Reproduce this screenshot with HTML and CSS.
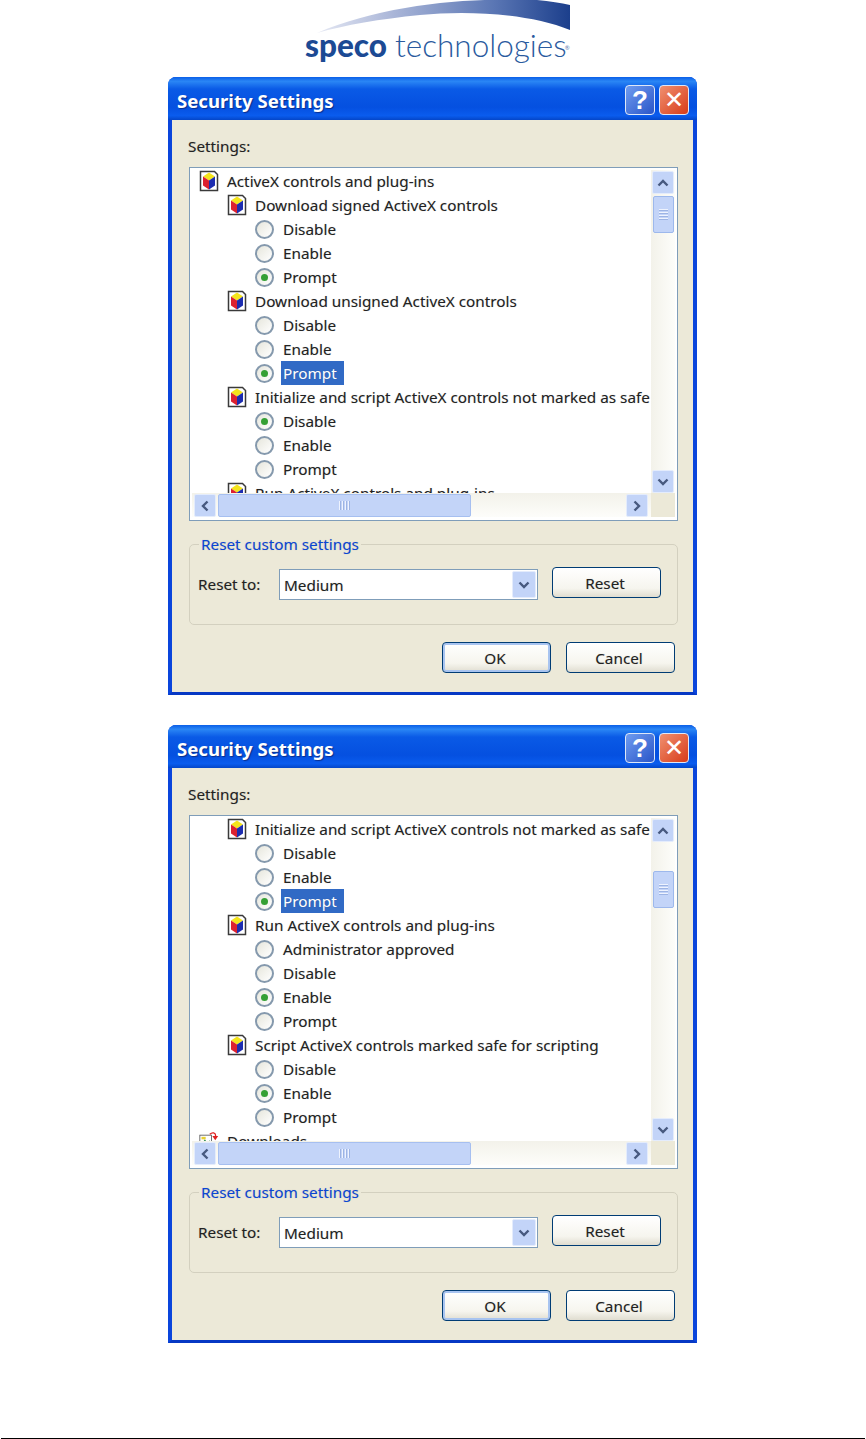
FILE: index.html
```html
<!DOCTYPE html>
<html lang="en">
<head>
<meta charset="utf-8">
<title>Security Settings</title>
<link rel="stylesheet" href="styles.css">
</head>
<body>
<svg class="defs" width="0" height="0" aria-hidden="true">
  <defs>
    <linearGradient id="sw" x1="0" x2="1" y1="0" y2="0">
      <stop offset="0" stop-color="#e6e9f4"/>
      <stop offset=".3" stop-color="#aab6d8"/>
      <stop offset=".7" stop-color="#5a76b4"/>
      <stop offset="1" stop-color="#1c3f8c"/>
    </linearGradient>
    <symbol id="shield" viewBox="0 0 20 22">
      <path d="M1.500 1.500H15.500L18.500 4.500V20.500H1.500Z" fill="#fff" stroke="#3a3a3a" stroke-width="1.500"/>
      <path d="M10 2.500L16 6.500L10 10.500L4 6.500Z" fill="#f4e41c"/>
      <path d="M4 6.500L10 10.500V19.500L4 15.500Z" fill="#dc2030"/>
      <path d="M16 6.500L10 10.500V19.500L16 15.500Z" fill="#1c2cb0"/>
    </symbol>
    <symbol id="dl" viewBox="0 0 24 22">
      <rect x="1" y="4" width="14" height="14" fill="#fff" stroke="#555"/>
      <path d="M3 15L7 9L10 13L13 10V16H3Z" fill="#2a8a4a"/>
      <rect x="3" y="6" width="5" height="3" fill="#e8d030"/>
      <path d="M13 3C16 0 20 1 20 5" fill="none" stroke="#e02020" stroke-width="1.600"/>
      <path d="M16 5H23L19.500 10Z" fill="#e02020"/>
    </symbol>
    <symbol id="up" viewBox="0 0 12 8"><path d="M1.500 6.500L6 2L10.500 6.500" fill="none" stroke="#47597f" stroke-width="2.400"/></symbol>
    <symbol id="down" viewBox="0 0 12 8"><path d="M1.500 1.500L6 6L10.500 1.500" fill="none" stroke="#47597f" stroke-width="2.400"/></symbol>
    <symbol id="left" viewBox="0 0 8 12"><path d="M6.500 1.500L2 6L6.500 10.500" fill="none" stroke="#47597f" stroke-width="2.400"/></symbol>
    <symbol id="right" viewBox="0 0 8 12"><path d="M1.500 1.500L6 6L1.500 10.500" fill="none" stroke="#47597f" stroke-width="2.400"/></symbol>
  </defs>
</svg>

<div class="page">
  <header class="logo">
    <svg class="swoosh" width="266" height="33" viewBox="0 0 266 33"><path d="M12 33C65 10 135 0 190 0H232C245 1 256 3 265 5V30C225 14 165 10 115 15C75 19 40 25 12 33Z" fill="url(#sw)"/></svg>
    <div class="wordmark"><span class="speco">speco</span><span class="tech">technologies</span><span class="reg">®</span></div>
  </header>

  <main class="dialogs">
    <section class="dialog">
      <div class="titlebar">
        <h1 class="title">Security Settings</h1>
        <div class="winbtns">
          <span class="winbtn help">?</span>
          <span class="winbtn close">✕</span>
        </div>
      </div>
      <div class="body">
        <div class="label">Settings:</div>
        <div class="listbox">
          <div class="viewport">
            <div class="row l0"><svg class="ico"><use href="#shield"/></svg><span>ActiveX controls and plug-ins</span></div>
            <div class="row l1"><svg class="ico"><use href="#shield"/></svg><span>Download signed ActiveX controls</span></div>
            <div class="row l2"><i class="radio"></i><span>Disable</span></div>
            <div class="row l2"><i class="radio"></i><span>Enable</span></div>
            <div class="row l2"><i class="radio on"><b></b></i><span>Prompt</span></div>
            <div class="row l1"><svg class="ico"><use href="#shield"/></svg><span>Download unsigned ActiveX controls</span></div>
            <div class="row l2"><i class="radio"></i><span>Disable</span></div>
            <div class="row l2"><i class="radio"></i><span>Enable</span></div>
            <div class="row l2"><i class="radio on"><b></b></i><span class="sel">Prompt</span></div>
            <div class="row l1"><svg class="ico"><use href="#shield"/></svg><span>Initialize and script ActiveX controls not marked as safe</span></div>
            <div class="row l2"><i class="radio on"><b></b></i><span>Disable</span></div>
            <div class="row l2"><i class="radio"></i><span>Enable</span></div>
            <div class="row l2"><i class="radio"></i><span>Prompt</span></div>
            <div class="row l1"><svg class="ico"><use href="#shield"/></svg><span>Run ActiveX controls and plug-ins</span></div>
          </div>
          <div class="vbar">
            <span class="sbtn"><svg class="arrow-v"><use href="#up"/></svg></span>
            <div class="vtrack"><div class="vthumb"><i></i><i></i><i></i><i></i></div></div>
            <span class="sbtn"><svg class="arrow-v"><use href="#down"/></svg></span>
          </div>
          <div class="hbar">
            <span class="sbtn"><svg class="arrow-h"><use href="#left"/></svg></span>
            <div class="htrack"><div class="hthumb"><i></i><i></i><i></i><i></i></div></div>
            <span class="sbtn"><svg class="arrow-h"><use href="#right"/></svg></span>
          </div>
          <div class="corner"></div>
        </div>
        <fieldset class="group">
          <legend class="legend">Reset custom settings</legend>
          <div class="reset-row">
            <span class="reset-label">Reset to:</span>
            <div class="combo"><span class="combo-val">Medium</span><span class="sbtn combo-btn"><svg class="arrow-v"><use href="#down"/></svg></span></div>
            <button class="btn btn-reset" type="button">Reset</button>
          </div>
        </fieldset>
        <div class="actions">
          <button class="btn default" type="button">OK</button>
          <button class="btn" type="button">Cancel</button>
        </div>
      </div>
    </section>

    <section class="dialog">
      <div class="titlebar">
        <h1 class="title">Security Settings</h1>
        <div class="winbtns">
          <span class="winbtn help">?</span>
          <span class="winbtn close">✕</span>
        </div>
      </div>
      <div class="body">
        <div class="label">Settings:</div>
        <div class="listbox">
          <div class="viewport">
            <div class="row l1"><svg class="ico"><use href="#shield"/></svg><span>Initialize and script ActiveX controls not marked as safe</span></div>
            <div class="row l2"><i class="radio"></i><span>Disable</span></div>
            <div class="row l2"><i class="radio"></i><span>Enable</span></div>
            <div class="row l2"><i class="radio on"><b></b></i><span class="sel">Prompt</span></div>
            <div class="row l1"><svg class="ico"><use href="#shield"/></svg><span>Run ActiveX controls and plug-ins</span></div>
            <div class="row l2"><i class="radio"></i><span>Administrator approved</span></div>
            <div class="row l2"><i class="radio"></i><span>Disable</span></div>
            <div class="row l2"><i class="radio on"><b></b></i><span>Enable</span></div>
            <div class="row l2"><i class="radio"></i><span>Prompt</span></div>
            <div class="row l1"><svg class="ico"><use href="#shield"/></svg><span>Script ActiveX controls marked safe for scripting</span></div>
            <div class="row l2"><i class="radio"></i><span>Disable</span></div>
            <div class="row l2"><i class="radio on"><b></b></i><span>Enable</span></div>
            <div class="row l2"><i class="radio"></i><span>Prompt</span></div>
            <div class="row l0"><svg class="ico"><use href="#dl"/></svg><span>Downloads</span></div>
          </div>
          <div class="vbar">
            <span class="sbtn"><svg class="arrow-v"><use href="#up"/></svg></span>
            <div class="vtrack lower"><div class="vthumb"><i></i><i></i><i></i><i></i></div></div>
            <span class="sbtn"><svg class="arrow-v"><use href="#down"/></svg></span>
          </div>
          <div class="hbar">
            <span class="sbtn"><svg class="arrow-h"><use href="#left"/></svg></span>
            <div class="htrack"><div class="hthumb"><i></i><i></i><i></i><i></i></div></div>
            <span class="sbtn"><svg class="arrow-h"><use href="#right"/></svg></span>
          </div>
          <div class="corner"></div>
        </div>
        <fieldset class="group">
          <legend class="legend">Reset custom settings</legend>
          <div class="reset-row">
            <span class="reset-label">Reset to:</span>
            <div class="combo"><span class="combo-val">Medium</span><span class="sbtn combo-btn"><svg class="arrow-v"><use href="#down"/></svg></span></div>
            <button class="btn btn-reset" type="button">Reset</button>
          </div>
        </fieldset>
        <div class="actions">
          <button class="btn default" type="button">OK</button>
          <button class="btn" type="button">Cancel</button>
        </div>
      </div>
    </section>
  </main>

  <footer class="rule"></footer>
</div>
</body>
</html>
```
FILE: styles.css
```css
* { box-sizing: border-box; }
html, body { margin: 0; padding: 0; background: #fff; }
body { font-family: "Noto Sans", "Open Sans", sans-serif; color: #222; overflow: hidden; }
.defs { display: block; height: 0; }

.page { height: 1439px; display: flex; flex-direction: column; }

/* logo */
.logo { flex: none; height: 77px; margin-left: 305px; width: 270px; display: flex; flex-direction: column; }
.swoosh { display: block; flex: none; }
.wordmark { display: flex; align-items: baseline; height: 30px; margin-top: -3px; font-family: Lato, "Open Sans", sans-serif; line-height: 30px; }
.speco { font-size: 31.500px; font-weight: 900; color: #1c4a94; }
.tech { font-size: 31.500px; font-weight: 300; margin-left: 8px; color: #2a5a9e; }
.reg { font-size: 6px; align-self: flex-start; margin: 3px 0 0 -2px; color: #5a7ab0; }

/* dialogs */
.dialogs { display: flex; flex-direction: column; gap: 30px; padding-left: 168px; }
.dialog { width: 529px; height: 618px; display: flex; flex-direction: column; background: #0a3fd8; border-radius: 8px 8px 0 0; border: 4px solid #0a45dc; border-top: 0; border-bottom: 3px solid #0638c4; }

.titlebar { flex: none; height: 43px; margin: 0 -4px; padding: 0 8px 0 9px; display: flex; align-items: center; justify-content: space-between; border-radius: 8px 8px 0 0; background: linear-gradient(180deg, #0a5fe8 0%, #2a86f5 10%, #0a5ae6 28%, #0550e0 70%, #0a5cee 90%, #0446c8 100%); }
.title { margin: 4px 0 0; font-size: 18.600px; font-weight: 700; color: #fff; text-shadow: 1px 1px 1px #0a2f8c; }
.winbtns { display: flex; gap: 4px; margin-top: 3px; }
.winbtn { width: 30px; height: 30px; border: 1px solid #dfe8f8; border-radius: 4px; display: flex; align-items: center; justify-content: center; color: #fff; font-weight: 700; font-size: 26px; line-height: 1; }
.help { background: linear-gradient(135deg, #6f9cf0, #2a55c8); font-family: "Liberation Sans", sans-serif; }
.close { background: linear-gradient(135deg, #f09070, #d83c18); font-size: 24px; font-family: "DejaVu Sans", sans-serif; }

.body { flex: 1; min-height: 0; background: #ece9d8; padding: 17px 16px 0 17px; display: flex; flex-direction: column; text-shadow: 0 0 1px rgba(70, 70, 70, .3); }
.label { font-size: 15.300px; height: 20px; line-height: 19px; margin: 0 0 10px -1px; }

/* list */
.listbox { flex: none; height: 354px; width: 489px; background: #fff; border: 1px solid #7f9db9; padding: 2px 2px 3px; display: grid; grid-template-columns: 1fr 24px; grid-template-rows: 1fr 24px; }
.viewport { overflow: hidden; min-width: 0; min-height: 0; }
.row { height: 24px; display: flex; align-items: center; font-size: 15.300px; white-space: nowrap; }
.row:first-child { margin-top: -1px; }
.l0 { padding-left: 7px; }
.l1 { padding-left: 35px; }
.l2 { padding-left: 63px; }
.ico { width: 20px; height: 22px; flex: none; margin-right: 8px; }
.radio { width: 19px; height: 19px; flex: none; margin-right: 9px; border-radius: 50%; border: 2px solid #8599ad; background: linear-gradient(135deg, #e6e6dc, #fff); display: flex; align-items: center; justify-content: center; }
.radio b { width: 7px; height: 7px; border-radius: 50%; background: #35a035; display: block; }
.sel { background: #316ac5; color: #fff; height: 24px; line-height: 24px; padding: 0 7px 0 2px; margin-left: -2px; }

/* scrollbars */
.vbar { display: flex; flex-direction: column; background: linear-gradient(90deg, #f3f2ea, #fdfdfa); padding: 1px 0 0 1px; }
.hbar { display: flex; background: linear-gradient(180deg, #f3f2ea, #fdfdfa); padding: 1px 3px 0 2px; }
.corner { background: #ece9d8; }
.sbtn { flex: none; width: 22px; height: 23px; display: flex; align-items: center; justify-content: center; background: #c3d4f8; border: 1px solid #e4ecfc; border-radius: 2px; }
.arrow-v { width: 12px; height: 8px; }
.arrow-h { width: 8px; height: 12px; }
.vtrack { flex: 1; padding-top: 2px; }
.vtrack.lower { padding-top: 29px; }
.vthumb { width: 21px; height: 37px; margin-left: 1px; background: #c3d4f8; border: 1px solid #9db8ec; border-radius: 2px; display: flex; flex-direction: column; align-items: center; justify-content: center; gap: 1px; }
.vthumb i { display: block; width: 9px; height: 1px; background: #eef3fe; box-shadow: 0 1px 0 #9db4e4; margin-bottom: 1px; }
.htrack { flex: 1; padding-left: 2px; }
.hthumb { width: 253px; height: 23px; background: #c3d4f8; border: 1px solid #a6bff0; border-radius: 2px; display: flex; align-items: center; justify-content: center; gap: 1px; }
.hthumb i { display: block; width: 1px; height: 9px; background: #eef3fe; box-shadow: 1px 0 0 #9db4e4; margin-right: 1px; }

/* group */
.group { flex: none; width: 489px; height: 91px; margin: 13px 0 0; padding: 0 15px 0 8px; border: 1px solid #d3d0bf; border-radius: 5px; }
.legend { font-size: 15.300px; color: #0a46d5; padding: 0 2px; margin-left: 1px; line-height: 21px; }
.reset-row { display: flex; align-items: center; margin-top: 12px; }
.reset-label { font-size: 15.300px; width: 81px; flex: none; margin-bottom: 2px; }
.combo { width: 259px; height: 31px; flex: none; display: flex; align-items: center; justify-content: space-between; background: #fff; border: 1px solid #7f9db9; padding: 0 1px 0 4px; font-size: 15.300px; }
.combo-btn { height: 27px; width: 24px; }
.btn { font: inherit; font-size: 15.300px; color: #222; text-shadow: inherit; width: 109px; height: 31px; padding: 0 3px 0 0; border: 1px solid #003c74; border-radius: 4px; background: linear-gradient(180deg, #fff 0%, #f6f5ee 70%, #e0ddd0 100%); }
.btn-reset { margin: 0 0 4px 14px; }
.default { box-shadow: inset 0 0 0 2px #a8c4f0; }

.actions { display: flex; gap: 15px; justify-content: flex-end; padding-right: 2px; margin-top: 17px; }

.rule { margin: auto 1px 0; height: 1px; background: #000; }
```
